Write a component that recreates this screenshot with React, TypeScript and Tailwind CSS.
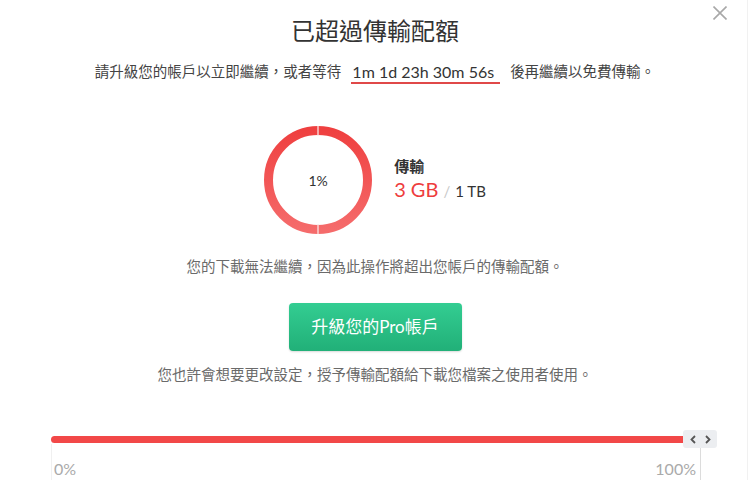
import React from "react";

export default function App() {
  return (
    <div className="relative w-[750px] h-[480px] bg-white overflow-hidden font-['Lato','Noto_Sans_CJK_TC',sans-serif] text-[#333]">
      <div className="absolute right-[2px] top-0 bottom-0 w-px bg-[#f1f1f1]" />
      <button className="absolute left-[713px] top-[6px] w-[14px] h-[14px]" aria-label="close">
        <svg width="14" height="14" viewBox="0 0 14 14">
          <path d="M0.5 0.5 L13.5 13.5 M13.5 0.5 L0.5 13.5" stroke="#a8a8a8" strokeWidth="1.6" fill="none" />
        </svg>
      </button>

      <h1 className="mt-[15px] text-center text-[24px] leading-[32px] text-[#333] font-normal">已超過傳輸配額</h1>

      <div className="mt-[13px] flex h-[24px] items-center justify-center text-[14.5px] text-[#444]">
        <span>請升級您的帳戶以立即繼續，或者等待</span>
        <span className="mx-[10px] inline-block border-b-2 border-[#e04848] px-[1px] pr-[6px] text-[16px] leading-[21px] text-[#333]">1m 1d 23h 30m 56s</span>
        <span>後再繼續以免費傳輸。</span>
      </div>

      <div className="mt-[42px] flex items-center justify-center gap-[22px]">
        <div className="relative h-[108px] w-[108px]">
          <svg width="108" height="108" viewBox="0 0 108 108">
            <defs>
              <linearGradient id="rg" x1="0" y1="0" x2="0" y2="1">
                <stop offset="0" stopColor="#ef4040" />
                <stop offset="1" stopColor="#f56b6b" />
              </linearGradient>
            </defs>
            <circle cx="54" cy="54" r="49.5" fill="none" stroke="url(#rg)" strokeWidth="9" />
            <line x1="54" y1="0" x2="54" y2="10" stroke="#fbe3e3" strokeWidth="1.3" />
            <line x1="54" y1="98" x2="54" y2="108" stroke="#fbe3e3" strokeWidth="1.3" />
          </svg>
          <div className="absolute inset-0 flex items-center justify-center text-[14px] text-[#333]">1%</div>
        </div>
        <div className="flex flex-col">
          <div className="text-[15px] font-bold leading-[20px] text-[#333]">傳輸</div>
          <div className="flex items-baseline leading-[26px]">
            <span className="text-[20px] text-[#ee3d3d]">3 GB</span>
            <span className="ml-[5px] text-[15px] text-[#c8c8c8]">/</span>
            <span className="ml-[5px] text-[15px] text-[#333]">1 TB</span>
          </div>
        </div>
      </div>

      <p className="mt-[23px] text-center text-[14.5px] leading-[20px] text-[#6a6a6a]">您的下載無法繼續，因為此操作將超出您帳戶的傳輸配額。</p>

      <div className="mt-[26px] flex justify-center">
        <button className="h-[48px] w-[173px] rounded-[4px] bg-gradient-to-b from-[#33cd92] to-[#21b078] text-[17px] text-white shadow-[0_1px_2px_rgba(0,0,0,0.15)]">
          升級您的Pro帳戶
        </button>
      </div>

      <p className="mt-[14px] text-center text-[14.5px] leading-[20px] text-[#6a6a6a]">您也許會想要更改設定，授予傳輸配額給下載您檔案之使用者使用。</p>

      <div className="relative mt-[45px] ml-[51px] flex h-[18px] w-[666px] items-center">
        <div className="absolute left-0 top-[14px] h-[40px] w-px bg-[#f0f0f0]" />
        <div className="h-[7px] flex-1 rounded-l-full bg-[#f24848]" />
        <div className="relative flex h-[18px] w-[34px] items-center justify-center gap-[9px] rounded-[3px] bg-[#eceef1]">
          <svg width="6" height="9" viewBox="0 0 6 9">
            <polyline points="5,1 1.5,4.5 5,8" fill="none" stroke="#555" strokeWidth="1.8" />
          </svg>
          <svg width="6" height="9" viewBox="0 0 6 9">
            <polyline points="1,1 4.5,4.5 1,8" fill="none" stroke="#555" strokeWidth="1.8" />
          </svg>
          <div className="absolute left-1/2 top-full h-[40px] w-px bg-[#dcdcdc]" />
        </div>
      </div>

      <div className="mt-[11px] ml-[54px] flex w-[642px] justify-between text-[16px] leading-[20px] text-[#aaa]">
        <span>0%</span>
        <span>100%</span>
      </div>
    </div>
  );
}
